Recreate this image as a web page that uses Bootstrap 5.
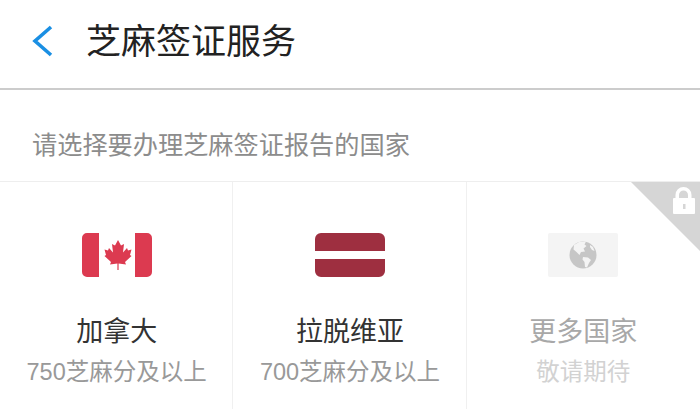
<!DOCTYPE html>
<html lang="zh"><head><meta charset="utf-8"><title>芝麻签证服务</title>
<link href="https://cdn.jsdelivr.net/npm/bootstrap@5.3.0/dist/css/bootstrap.min.css" rel="stylesheet">
<style>
html,body{height:409px;overflow:hidden;background:#fff;font-family:"Liberation Sans","Noto Sans CJK SC",sans-serif}
.app-head{height:90px;border-bottom:2px solid #ccc;padding:0 0 6px 31px;gap:33px}
.app-title{font-size:35px;color:#222;line-height:1;margin:0;font-weight:400}
.prompt{height:91px;padding:20px 32px 0;font-size:25.2px;color:#8c8c8c}
.grid-wrap{border-top:1px solid #eee;height:228px}
.cell{height:228px;border-right:1px solid #f0f0f0;padding-top:51px}
.cell:not(:last-child){padding-left:1px}
.cell:not(:last-child) .flag{margin-left:1px}
.cell:last-child{border-right:0}
.flag{width:70px;height:44px;display:block}
.c-name{font-size:27px;line-height:1;color:#333;margin-top:42px}
.c-sub{font-size:23.5px;line-height:1;color:#999;margin-top:15px}
.c-name.off{color:#a8a8a8}.c-sub.off{color:#d2d2d2}
.corner{position:absolute;top:0;right:0;width:69px;height:69px}
</style></head><body>
<header class="app-head d-flex align-items-center">
<svg width="22" height="32" viewBox="0 0 22 32"><path d="M20 2 4 16l16 14" fill="none" stroke="#1a8fe3" stroke-width="3.6"/></svg>
<h1 class="app-title">芝麻签证服务</h1>
</header>
<div class="prompt d-flex align-items-center">请选择要办理芝麻签证报告的国家</div>
<div class="grid-wrap position-relative">
<div class="row g-0">
<div class="col-4 cell d-flex flex-column align-items-center">
<svg class="flag" viewBox="0 0 70 44"><path d="M5 0H17V44H5A5 5 0 0 1 0 39V5A5 5 0 0 1 5 0ZM53 0H65A5 5 0 0 1 70 5V39A5 5 0 0 1 65 44H53Z" fill="#dc3a50"/><path d="M36 7l3 5.500 3-1.500-1 8.500 4-4.500 1 2.500 3.500-1-1.500 5.500 1.500 1-6.500 6 1 2.500-7.400-1V37h-1.200v-6.500l-7.400 1 1-2.500-6.500-6 1.500-1-1.500-5.500 3.500 1 1-2.500 4 4.500-1-8.500 3 1.500z" fill="#dc3a50"/></svg>
<div class="c-name">加拿大</div><div class="c-sub">750芝麻分及以上</div>
</div>
<div class="col-4 cell d-flex flex-column align-items-center">
<svg class="flag" viewBox="0 0 70 44"><path d="M6 0H64A6 6 0 0 1 70 6V18H0V6A6 6 0 0 1 6 0ZM0 26H70V38A6 6 0 0 1 64 44H6A6 6 0 0 1 0 38Z" fill="#9e2f40"/></svg>
<div class="c-name">拉脱维亚</div><div class="c-sub">700芝麻分及以上</div>
</div>
<div class="col-4 cell d-flex flex-column align-items-center">
<svg class="flag" viewBox="0 0 70 44"><rect width="70" height="44" rx="2" fill="#f4f4f4"/><circle cx="35" cy="22" r="13.5" fill="#c6c6c6"/><path d="M26 12l5-3 7-.5-1.500 3 2 1.500-3 2.500 1.500 3-4 .5-1.500 3-3-3-3-2.500zM35 24l5 .5 3 2.500-2 3-2 4.500-2-.5-.5-5-2-2.500zM42 12l3 2 1.500 4-2.500-1-2-3z" fill="#f4f4f4"/></svg>
<div class="c-name off">更多国家</div><div class="c-sub off">敬请期待</div>
</div>
</div>
<svg class="corner" viewBox="0 0 69 69"><path d="M0 0H69V69Z" fill="#d6d6d6"/><path d="M44.500 16v-3a8 8 0 0 1 16 0v3h-3.500v-3a4.500 4.500 0 0 0-9 0v3z" fill="#fff"/><rect x="42" y="16" width="22" height="16" rx="1" fill="#fff"/><rect x="52" y="22" width="2.500" height="5" fill="#d6d6d6"/></svg>
</div>
</body></html>
